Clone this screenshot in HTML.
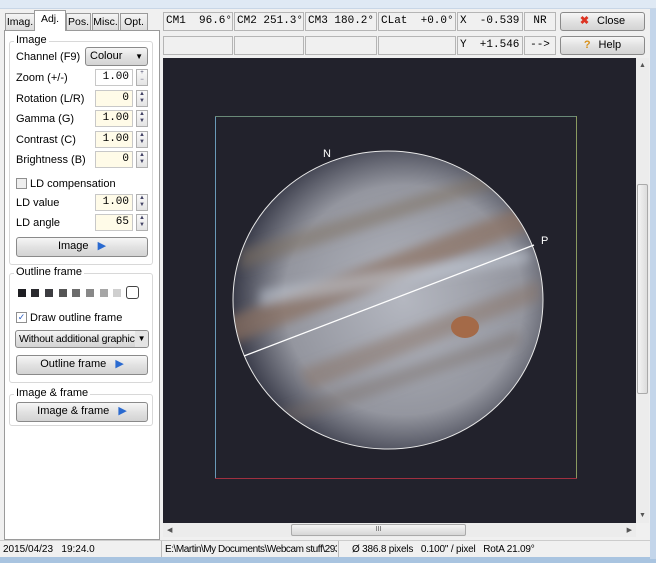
<!DOCTYPE html>
<html><head><meta charset="utf-8"><style>
*{box-sizing:border-box;margin:0;padding:0}
body{width:656px;height:563px;background:#f0f0f0;font-family:"Liberation Sans",sans-serif;font-size:11px;color:#000;position:relative;overflow:hidden}
.a{position:absolute}
.box{position:absolute;border:1px solid #b5b5b5;background:#f0f0f0;font-family:"Liberation Mono",monospace;font-size:11px;line-height:16px;padding-left:2px;white-space:pre}
.btn{position:absolute;border:1px solid #8a8a8a;border-radius:3px;background:linear-gradient(#f6f6f6,#e2e2e2 50%,#d3d3d3);text-align:center;line-height:17px}
.inp{position:absolute;left:95px;width:38px;height:17px;border:1px solid #c8c8c8;background:#fffbe8;font-family:"Liberation Mono",monospace;font-size:11px;text-align:right;padding-right:3px;line-height:15px}
.sp{position:absolute;left:136px;width:12px;height:17px;border:1px solid #b0b0b0;background:linear-gradient(#fafafa,#e4e4e4);font-size:6px;line-height:7px;text-align:center;color:#446}
.lbl{position:absolute;left:16px}
.grp{position:absolute;border:1px solid #d8d8d8;border-radius:3px}
.gt{position:absolute;background:#fff;padding:0 2px;top:-8px;left:4px}
.tab{position:absolute;top:13px;height:17px;border:1px solid #9a9a9a;border-bottom:none;background:linear-gradient(#f4f4f4,#dcdcdc);text-align:center;line-height:16px;font-size:10.5px}
.sq{position:absolute;top:289px;width:8px;height:8px}
</style></head><body>
<div class="a" style="left:0;top:0;width:656px;height:9px;background:#dfe9f4;border-bottom:1px solid #c8d6e6"></div>
<div class="a" style="left:0;top:557px;width:656px;height:6px;background:#a9c4e0"></div>
<div class="a" style="left:650px;top:9px;width:6px;height:550px;background:#c3d5ea"></div>

<div class="tab" style="left:5px;width:30px">Imag.</div>
<div class="tab" style="left:34px;top:10px;height:21px;width:32px;background:#fff;z-index:2">Adj.</div>
<div class="tab" style="left:66px;width:25px">Pos.</div>
<div class="tab" style="left:92px;width:27px">Misc.</div>
<div class="tab" style="left:120px;width:28px">Opt.</div>
<div class="a" style="left:4px;top:30px;width:156px;height:510px;background:#fff;border:1px solid #9a9a9a"></div>

<div class="grp" style="left:9px;top:41px;width:144px;height:224px"><span class="gt">Image</span></div>
<div class="lbl" style="top:51px">Channel (F9)</div>
<div class="btn" style="left:85px;top:47px;width:63px;height:19px;text-align:left;padding-left:4px">Colour<span style="position:absolute;right:4px;font-size:8px">▼</span></div>
<div class="lbl" style="top:72px">Zoom (+/-)</div><div class="inp" style="top:69px;background:#fff">1.00</div><div class="sp" style="top:69px">+<br>−</div>
<div class="lbl" style="top:93px">Rotation (L/R)</div><div class="inp" style="top:90px">0</div><div class="sp" style="top:90px">▲<br>▼</div>
<div class="lbl" style="top:113px">Gamma (G)</div><div class="inp" style="top:110px">1.00</div><div class="sp" style="top:110px">▲<br>▼</div>
<div class="lbl" style="top:134px">Contrast (C)</div><div class="inp" style="top:131px">1.00</div><div class="sp" style="top:131px">▲<br>▼</div>
<div class="lbl" style="top:154px">Brightness (B)</div><div class="inp" style="top:151px">0</div><div class="sp" style="top:151px">▲<br>▼</div>
<div class="a" style="left:16px;top:178px;width:11px;height:11px;border:1px solid #8f8f8f;background:#eee"></div><div class="a" style="left:30px;top:178px">LD compensation</div>
<div class="lbl" style="top:197px">LD value</div><div class="inp" style="top:194px">1.00</div><div class="sp" style="top:194px">▲<br>▼</div>
<div class="lbl" style="top:217px">LD angle</div><div class="inp" style="top:214px">65</div><div class="sp" style="top:214px">▲<br>▼</div>
<div class="btn" style="left:16px;top:237px;width:132px;height:20px">Image <span style="color:#2a6ad0;margin-left:6px">▶</span></div>

<div class="grp" style="left:9px;top:273px;width:144px;height:110px"><span class="gt">Outline frame</span></div>
<div class="sq" style="left:18px;background:#1e1e22"></div><div class="sq" style="left:31px;background:#2a2a2e"></div><div class="sq" style="left:45px;background:#3c3c40"></div><div class="sq" style="left:59px;background:#555"></div><div class="sq" style="left:72px;background:#6c6c6c"></div><div class="sq" style="left:86px;background:#888"></div><div class="sq" style="left:100px;background:#a6a6a6"></div><div class="sq" style="left:113px;background:#cfcfcf"></div>
<div class="a" style="left:126px;top:286px;width:13px;height:13px;border:1px solid #444;border-radius:3px;background:#fff"></div>
<div class="a" style="left:16px;top:312px;width:11px;height:11px;border:1px solid #8f8f8f;background:#fff;font-size:9px;line-height:9px;color:#2a5cc0;text-align:center">✓</div><div class="a" style="left:30px;top:312px">Draw outline frame</div>
<div class="btn" style="left:15px;top:330px;width:134px;height:18px;text-align:left;padding-left:3px;line-height:16px;font-size:10.5px;overflow:hidden;white-space:nowrap;letter-spacing:-0.2px">Without additional graphic<span style="position:absolute;right:0;top:0;width:13px;height:16px;text-align:center;font-size:8px;background:#e4e4e4">▼</span></div>
<div class="btn" style="left:16px;top:355px;width:132px;height:20px">Outline frame <span style="color:#2a6ad0;margin-left:6px">▶</span></div>

<div class="grp" style="left:9px;top:394px;width:144px;height:32px"><span class="gt">Image &amp; frame</span></div>
<div class="btn" style="left:16px;top:402px;width:132px;height:20px">Image &amp; frame <span style="color:#2a6ad0;margin-left:6px">▶</span></div>

<div class="box" style="left:163px;top:12px;width:70px;height:19px">CM1  96.6°</div>
<div class="box" style="left:234px;top:12px;width:70px;height:19px">CM2 251.3°</div>
<div class="box" style="left:305px;top:12px;width:72px;height:19px">CM3 180.2°</div>
<div class="box" style="left:378px;top:12px;width:78px;height:19px">CLat  +0.0°</div>
<div class="box" style="left:457px;top:12px;width:66px;height:19px">X  -0.539</div>
<div class="box" style="left:524px;top:12px;width:32px;height:19px;text-align:center;padding:0">NR</div>
<div class="btn" style="left:560px;top:12px;width:85px;height:19px"><span style="color:#d32;font-weight:bold;margin-right:8px">✖</span>Close</div>
<div class="box" style="left:163px;top:36px;width:70px;height:19px"></div>
<div class="box" style="left:234px;top:36px;width:70px;height:19px"></div>
<div class="box" style="left:305px;top:36px;width:72px;height:19px"></div>
<div class="box" style="left:378px;top:36px;width:78px;height:19px"></div>
<div class="box" style="left:457px;top:36px;width:66px;height:19px">Y  +1.546</div>
<div class="box" style="left:524px;top:36px;width:32px;height:19px;text-align:center;padding:0">--&gt;</div>
<div class="btn" style="left:560px;top:36px;width:85px;height:19px"><span style="color:#d8901a;font-weight:bold;margin-right:8px">?</span>Help</div>

<svg class="a" style="left:163px;top:58px" width="473" height="465" viewBox="163 58 473 465">
<defs>
<radialGradient id="j" cx="0.55" cy="0.5" r="0.55"><stop offset="0" stop-color="#b4b7c0"/><stop offset="0.7" stop-color="#94969f"/><stop offset="1" stop-color="#3a3c4a"/></radialGradient>
<clipPath id="c"><ellipse cx="388" cy="300" rx="155" ry="149"/></clipPath>
<filter id="b"><feGaussianBlur stdDeviation="5"/></filter>
</defs>
<rect x="163" y="58" width="473" height="465" fill="#22222c"/>
<line x1="215.5" y1="116" x2="215.5" y2="479" stroke="#6a9ab8"/>
<line x1="215" y1="116.5" x2="577" y2="116.5" stroke="#6a8a78"/>
<line x1="576.5" y1="116" x2="576.5" y2="479" stroke="#8a9a60"/>
<line x1="215" y1="478.5" x2="577" y2="478.5" stroke="#a03040"/>
<ellipse cx="388" cy="300" rx="155" ry="149" fill="url(#j)"/>
<g clip-path="url(#c)" filter="url(#b)">
<path d="M220 320 L540 200 L540 225 L230 345Z" fill="#8a7060" opacity=".7"/>
<path d="M240 250 L500 170 L500 185 L240 270Z" fill="#807060" opacity=".5"/>
<path d="M300 370 L540 280 L540 300 L310 390Z" fill="#8a7465" opacity=".5"/>
<path d="M260 290 L530 250 L530 262 L260 305Z" fill="#c8d0dc" opacity=".5"/>
<path d="M250 420 L520 330 L520 345 L260 435Z" fill="#7a6e68" opacity=".4"/>
</g>
<ellipse cx="465" cy="327" rx="14" ry="11" fill="#a46a48"/>
<ellipse cx="388" cy="300" rx="155" ry="149" fill="none" stroke="#e8e8e8" stroke-width="1"/>
<line x1="244" y1="356" x2="534" y2="245" stroke="#fff" stroke-width="1.3"/>
<text x="323" y="157" fill="#fff" font-family="Liberation Sans" font-size="11">N</text>
<text x="541" y="244" fill="#fff" font-family="Liberation Sans" font-size="11">P</text>
</svg>
<div class="a" style="left:636px;top:58px;width:13px;height:465px;background:#ececec;font-size:7px;text-align:center;color:#555"><div style="position:absolute;top:126px;left:1px;width:11px;height:210px;border:1px solid #aaa;border-radius:2px;background:linear-gradient(90deg,#f4f4f4,#dcdcdc)"></div><div style="position:absolute;top:4px;width:13px">▲</div><div style="position:absolute;bottom:4px;width:13px">▼</div></div>
<div class="a" style="left:163px;top:523px;width:473px;height:14px;background:#ececec;font-size:7px;color:#555"><div style="position:absolute;left:128px;top:1px;width:175px;height:12px;border:1px solid #aaa;border-radius:2px;background:linear-gradient(#f4f4f4,#d6d6d6);text-align:center;line-height:10px">III</div><span style="position:absolute;left:4px;top:3px">◀</span><span style="position:absolute;right:4px;top:3px">▶</span></div>

<div class="a" style="left:0;top:540px;width:650px;height:17px;background:#f0f0f0;border-top:1px solid #ccc;font-size:10px;line-height:17px;white-space:nowrap">
<span class="a" style="left:3px">2015/04/23&nbsp;&nbsp;&nbsp;19:24.0</span>
<span class="a" style="left:161px;top:0;height:16px;border-left:1px solid #bbb"></span>
<span class="a" style="left:165px;width:172px;overflow:hidden;letter-spacing:-0.45px">E:\Martin\My Documents\Webcam stuff\293 23-4-2015 Jup</span>
<span class="a" style="left:338px;top:0;height:16px;border-left:1px solid #bbb"></span>
<span class="a" style="left:352px;letter-spacing:-0.2px">Ø 386.8 pixels&nbsp;&nbsp;&nbsp;0.100" / pixel&nbsp;&nbsp;&nbsp;RotA 21.09°</span>
</div>
</body></html>
